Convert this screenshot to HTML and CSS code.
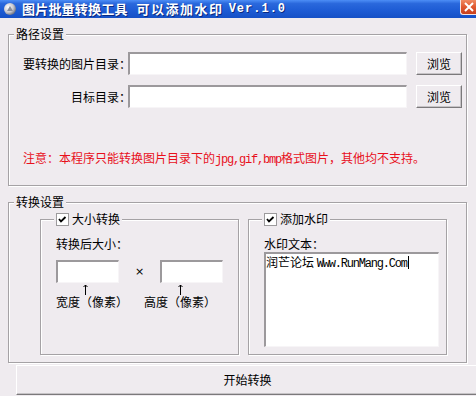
FILE: index.html
```html
<!DOCTYPE html>
<html lang="zh-CN">
<head>
<meta charset="utf-8">
<title>图片批量转换工具</title>
<link rel="stylesheet" href="styles.css">
</head>
<body>
<div class="titlebar">
  <svg class="app-icon" width="14" height="14" viewBox="0 0 14 14">
    <defs>
      <radialGradient id="ig" cx="0.35" cy="0.35" r="0.7">
        <stop offset="0" stop-color="#ffffff"/>
        <stop offset="0.6" stop-color="#c8c8d0"/>
        <stop offset="1" stop-color="#6a6f80"/>
      </radialGradient>
    </defs>
    <circle cx="7" cy="7" r="6" fill="url(#ig)"/>
    <path d="M4 9 L7 4 L10 9 Z" fill="#8a8f9c"/>
  </svg>
  <span class="title t1">图片批量转换工具</span>
  <span class="title t2">可以添加水印</span>
  <span class="title ver">Ver.1.0</span>
  <div class="close">
    <svg width="16" height="15" viewBox="0 0 16 15">
      <path d="M4 3 L12 11 M12 3 L4 11" stroke="#fff" stroke-width="2" fill="none"/>
    </svg>
  </div>
</div>

<div class="content">
  <div class="group path-group">
    <span class="group-title">路径设置</span>
    <div class="path-rows">
      <div class="path-row">
        <span class="row-label">要转换的图片目录<span class="colon">：</span></span>
        <div class="textbox path-box"></div>
        <div class="btn browse">浏览</div>
      </div>
      <div class="path-row">
        <span class="row-label">目标目录<span class="colon">：</span></span>
        <div class="textbox path-box"></div>
        <div class="btn browse">浏览</div>
      </div>
    </div>
    <p class="notice">注意：本程序只能转换图片目录下的<span class="lat">jpg,gif,bmp</span>格式图片，其他均不支持。</p>
  </div>

  <div class="group convert-group">
    <span class="group-title">转换设置</span>
    <div class="subgroups">
      <div class="group sub">
        <span class="group-title check-title">
          <svg class="checkbox" width="13" height="13" viewBox="0 0 13 13">
            <rect x="0.5" y="0.5" width="12" height="12" fill="#fff" stroke="#9c9a9c"/>
            <path d="M3 6 L5 8.5 L9.5 4" stroke="#000" stroke-width="1.8" fill="none"/>
          </svg>大小转换</span>
        <div class="caption">转换后大小：</div>
        <div class="size-inputs">
          <div class="textbox size-box"></div>
          <span class="times">×</span>
          <div class="textbox size-box"></div>
        </div>
        <div class="arrows">
          <svg class="arrow a1" width="5" height="11" viewBox="0 0 5 11"><path d="M2.5 1 V11 M0.5 3 L2.5 1 L4.5 3" stroke="#000" fill="none"/></svg>
          <svg class="arrow a2" width="5" height="11" viewBox="0 0 5 11"><path d="M2.5 1 V11 M0.5 3 L2.5 1 L4.5 3" stroke="#000" fill="none"/></svg>
        </div>
        <div class="dim-labels">
          <span class="dim">宽度（像素）</span>
          <span>高度（像素）</span>
        </div>
      </div>
      <div class="group sub">
        <span class="group-title check-title">
          <svg class="checkbox" width="13" height="13" viewBox="0 0 13 13">
            <rect x="0.5" y="0.5" width="12" height="12" fill="#fff" stroke="#9c9a9c"/>
            <path d="M3 6 L5 8.5 L9.5 4" stroke="#000" stroke-width="1.8" fill="none"/>
          </svg>添加水印</span>
        <div class="caption">水印文本：</div>
        <div class="textbox mark-text">润芒论坛 <span class="lat">Www.RunMang.Com</span><span class="caret"></span></div>
      </div>
    </div>
  </div>

  <div class="btn start">开始转换</div>
</div>
</body>
</html>
```

FILE: styles.css
```css
* {
  box-sizing: border-box;
}

html, body {
  margin: 0;
  padding: 0;
}

body {
  width: 476px;
  height: 396px;
  overflow: hidden;
  background: #efebef;
  font-family: "Noto Sans CJK SC", "Noto Sans", sans-serif;
  font-size: 12px;
  line-height: 14px;
  color: #000;
}

.titlebar {
  height: 18px;
  display: flex;
  align-items: center;
  overflow: hidden;
  color: #fff;
  background: linear-gradient(to bottom, #4c8ef6 0%, #2a68dc 20%, #1d5bd4 60%, #1550c6 100%);
}

.app-icon {
  flex: none;
  margin: 0 5px 0 3px;
}

.title {
  flex: none;
  font-weight: bold;
  font-size: 13px;
  white-space: nowrap;
  text-shadow: 1px 1px 0 #0a2a80;
}

.t1 {
  letter-spacing: 0.2px;
}

.t2 {
  margin-left: 9px;
  letter-spacing: 1.5px;
}

.ver {
  margin-left: 5px;
  font-size: 12px;
  font-family: "Liberation Mono", monospace;
  letter-spacing: 1px;
}

.close {
  flex: none;
  margin-left: auto;
  align-self: flex-start;
  width: 16px;
  height: 15px;
  background: linear-gradient(to bottom, #f08a62 0%, #e0582f 50%, #c9401c 100%);
  border-left: 1px solid #f4e4e0;
  border-bottom: 1px solid #f4e4e0;
  border-bottom-left-radius: 3px;
}

.close svg {
  display: block;
}

.content {
  padding: 16px 0 0 8px;
}

.group {
  position: relative;
  border: 1px solid #a5a2a5;
  box-shadow: inset 1px 1px 0 #fff, 1px 1px 0 #fff;
}

.group-title {
  position: absolute;
  top: -8px;
  left: 5px;
  padding: 0 2px;
  background: #efebef;
  line-height: 14px;
  white-space: nowrap;
}

.path-group {
  width: 459px;
  height: 152px;
  padding-top: 17px;
}

.path-rows {
  display: flex;
  flex-direction: column;
  gap: 10px;
}

.path-row {
  display: flex;
  align-items: center;
  height: 23px;
}

.row-label {
  width: 119px;
  text-align: right;
  white-space: nowrap;
}

.colon {
  display: inline-block;
  width: 9px;
  text-align: left;
  overflow: visible;
}

.textbox {
  background: #fff;
  border-style: solid;
  border-width: 2px 1px 1px 2px;
  border-color: #9c999c #f7f5f7 #f7f5f7 #9c999c;
}

.path-box {
  width: 279px;
  height: 23px;
}

.btn {
  display: flex;
  align-items: center;
  justify-content: center;
  background: #efebef;
  border: 1px solid;
  border-color: #fff #7b797b #7b797b #fff;
  box-shadow: inset -1px -1px 0 #c6c3c6;
}

.browse {
  margin-left: 9px;
  width: 46px;
  height: 23px;
}

.notice {
  margin: 43px 0 0 14px;
  color: #e8101c;
  white-space: nowrap;
}

.lat {
  font-family: "Liberation Mono", monospace;
  letter-spacing: -1.2px;
}

.convert-group {
  margin-top: 16px;
  width: 459px;
  height: 161px;
  padding: 16px 0 0 31px;
}

.subgroups {
  display: flex;
  gap: 9px;
}

.sub {
  width: 199px;
  height: 136px;
  padding: 17px 0 0 15px;
}

.check-title {
  left: 13px;
  display: flex;
  align-items: center;
  gap: 3px;
}

.checkbox {
  display: block;
  flex: none;
}

.caption {
  white-space: nowrap;
}

.size-inputs {
  margin-top: 9px;
  display: flex;
  align-items: center;
}

.size-box {
  width: 63px;
  height: 23px;
}

.times {
  width: 41px;
  text-align: center;
  font-family: "DejaVu Sans", sans-serif;
  font-size: 11px;
}

.arrows {
  display: flex;
  height: 12px;
  padding-top: 1px;
}

.arrow {
  display: block;
}

.a1 {
  margin-left: 27px;
}

.a2 {
  margin-left: 90px;
}

.dim-labels {
  display: flex;
  white-space: nowrap;
}

.dim {
  width: 88px;
}

.mark-text {
  margin-top: 1px;
  width: 175px;
  height: 95px;
  white-space: nowrap;
  line-height: 14px;
  padding-top: 1px;
}

.caret {
  display: inline-block;
  width: 1px;
  height: 13px;
  background: #000;
  vertical-align: -2px;
  margin-left: 1px;
}

.start {
  margin: 2px 0 0 8px;
  width: 463px;
  height: 30px;
}
```
